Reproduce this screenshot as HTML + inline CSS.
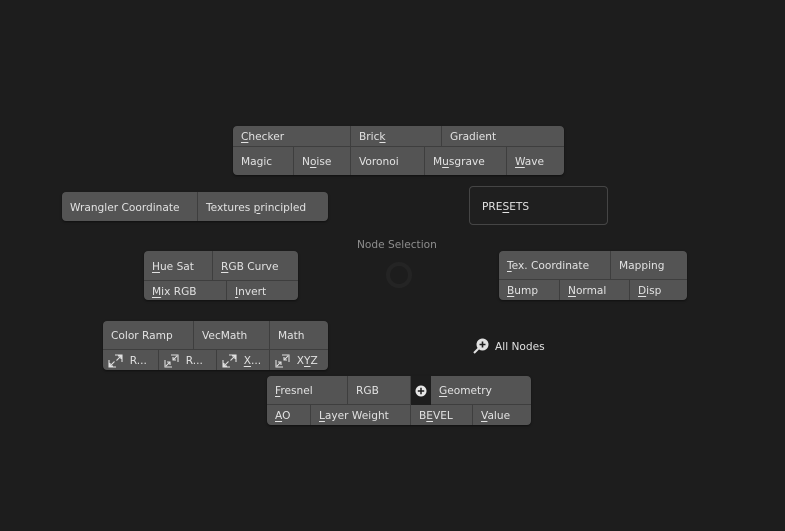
<!DOCTYPE html><html><head><style>
body{margin:0;width:785px;height:531px;background:#1d1d1d;overflow:hidden;font-family:"DejaVu Sans","Liberation Sans",sans-serif;font-size:10.6px;color:#e2e2e2;position:relative}
.b{position:absolute;background:#545454;border-radius:4px;overflow:hidden;box-shadow:0 1px 2px rgba(0,0,0,.5)}
.c{position:absolute;box-sizing:border-box;border-right:1px solid #3e3e3e;border-bottom:1px solid #3e3e3e;padding-left:8px;padding-top:2px;white-space:pre;display:flex;align-items:center}
.n{border-right:none}
u{text-decoration:underline;text-underline-offset:2px}
svg{flex:none}
</style></head><body>

<div class="b" style="left:233px;top:126px;width:331px;height:49px">
<div class="c" style="left:0;top:0;width:118px;height:21px"><span><u>C</u>hecker</span></div>
<div class="c" style="left:118px;top:0;width:91px;height:21px"><span>Bric<u>k</u></span></div>
<div class="c n" style="left:209px;top:0;width:122px;height:21px"><span>Gradient</span></div>
<div class="c" style="left:0;top:21px;width:61px;height:28px;border-bottom:none"><span>Magic</span></div>
<div class="c" style="left:61px;top:21px;width:57px;height:28px;border-bottom:none"><span>N<u>o</u>ise</span></div>
<div class="c" style="left:118px;top:21px;width:74px;height:28px;border-bottom:none"><span>Voronoi</span></div>
<div class="c" style="left:192px;top:21px;width:82px;height:28px;border-bottom:none"><span>M<u>u</u>sgrave</span></div>
<div class="c n" style="left:274px;top:21px;width:57px;height:28px;border-bottom:none"><span><u>W</u>ave</span></div>
</div>

<div class="b" style="left:62px;top:192px;width:266px;height:29px">
<div class="c" style="left:0;top:0;width:136px;height:29px;border-bottom:none"><span>Wrangler Coordinate</span></div>
<div class="c n" style="left:136px;top:0;width:130px;height:29px;border-bottom:none"><span>Textures <u>p</u>rincipled</span></div>
</div>

<div style="position:absolute;left:469px;top:186px;width:139px;height:39px;box-sizing:border-box;border:1px solid #454545;border-radius:4px;background:#1f1f1f;display:flex;align-items:center;padding-left:12px;padding-top:2px"><span>PRE<u>S</u>ETS</span></div>

<div style="position:absolute;left:357px;top:239px;color:#8e8e8e">Node Selection</div>
<div style="position:absolute;left:386px;top:262px;width:26px;height:26px;box-sizing:border-box;border:4px solid #242424;border-radius:50%"></div>

<div class="b" style="left:144px;top:251px;width:154px;height:49px">
<div class="c" style="left:0;top:0;width:69px;height:30px"><span><u>H</u>ue Sat</span></div>
<div class="c n" style="left:69px;top:0;width:85px;height:30px"><span><u>R</u>GB Curve</span></div>
<div class="c" style="left:0;top:30px;width:83px;height:19px;border-bottom:none"><span><u>M</u>ix RGB</span></div>
<div class="c n" style="left:83px;top:30px;width:71px;height:19px;border-bottom:none"><span><u>I</u>nvert</span></div>
</div>

<div class="b" style="left:499px;top:251px;width:188px;height:49px">
<div class="c" style="left:0;top:0;width:112px;height:29px"><span><u>T</u>ex. Coordinate</span></div>
<div class="c n" style="left:112px;top:0;width:76px;height:29px"><span>Mapping</span></div>
<div class="c" style="left:0;top:29px;width:61px;height:20px;border-bottom:none"><span><u>B</u>ump</span></div>
<div class="c" style="left:61px;top:29px;width:70px;height:20px;border-bottom:none"><span><u>N</u>ormal</span></div>
<div class="c n" style="left:131px;top:29px;width:57px;height:20px;border-bottom:none"><span><u>D</u>isp</span></div>
</div>

<div class="b" style="left:103px;top:321px;width:225px;height:49px">
<div class="c" style="left:0;top:0;width:91px;height:29px"><span>Color Ramp</span></div>
<div class="c" style="left:91px;top:0;width:76px;height:29px"><span>VecMath</span></div>
<div class="c n" style="left:167px;top:0;width:58px;height:29px"><span>Math</span></div>
<div class="c" style="left:0;top:29px;width:56px;height:20px;border-bottom:none;padding-left:5px"><svg width="15" height="14" viewBox="0 0 15 14" fill="none" stroke="#e0e0e0" stroke-width="1.1"><path d="M1 6V13H8M7 1H14V8M2 12L6.5 7.5M13 2L8.5 6.5M10 2H13V5M2 9V12H5"/></svg><span>  R...</span></div>
<div class="c" style="left:56px;top:29px;width:58px;height:20px;border-bottom:none;padding-left:5px"><svg width="15" height="14" viewBox="0 0 15 14" fill="none" stroke="#e0e0e0" stroke-width="1.1"><path d="M1 6V13H8M7 1H14V8M2 12L6 8M13 2L9 6M3 8H6V11M9 3V6H12"/></svg><span>  R...</span></div>
<div class="c" style="left:114px;top:29px;width:53px;height:20px;border-bottom:none;padding-left:5px"><svg width="15" height="14" viewBox="0 0 15 14" fill="none" stroke="#e0e0e0" stroke-width="1.1"><path d="M1 6V13H8M7 1H14V8M2 12L6.5 7.5M13 2L8.5 6.5M10 2H13V5M2 9V12H5"/></svg><span>  <u>X</u>...</span></div>
<div class="c n" style="left:167px;top:29px;width:58px;height:20px;border-bottom:none;padding-left:5px"><svg width="15" height="14" viewBox="0 0 15 14" fill="none" stroke="#e0e0e0" stroke-width="1.1"><path d="M1 6V13H8M7 1H14V8M2 12L6 8M13 2L9 6M3 8H6V11M9 3V6H12"/></svg><span>  X<u>Y</u>Z</span></div>
</div>

<div style="position:absolute;left:472px;top:337px;display:flex;align-items:center"><svg width="18" height="18" viewBox="0 0 18 18"><line x1="2" y1="16" x2="7" y2="11" stroke="#e0e0e0" stroke-width="2"/><circle cx="10.5" cy="7.5" r="6" fill="#e0e0e0"/><path d="M10.5 4.5V10.5M7.5 7.5H13.5" stroke="#1d1d1d" stroke-width="1.6"/></svg><span style="margin-left:5px;padding-top:2px">All Nodes</span></div>

<div class="b" style="left:267px;top:376px;width:264px;height:49px">
<div class="c" style="left:0;top:0;width:81px;height:29px"><span><u>F</u>resnel</span></div>
<div class="c" style="left:81px;top:0;width:63px;height:29px"><span>RGB</span></div>
<div style="position:absolute;left:144px;top:0;width:20px;height:29px;background:#1d1d1d;display:flex;align-items:center;justify-content:center"><svg width="12" height="12" viewBox="0 0 12 12"><circle cx="6" cy="6" r="5.5" fill="#e6e6e6"/><path d="M6 2.8V9.2M2.8 6H9.2" stroke="#1d1d1d" stroke-width="1.5"/></svg></div>
<div class="c n" style="left:164px;top:0;width:100px;height:29px"><span><u>G</u>eometry</span></div>
<div class="c" style="left:0;top:29px;width:44px;height:20px;border-bottom:none"><span><u>A</u>O</span></div>
<div class="c" style="left:44px;top:29px;width:100px;height:20px;border-bottom:none"><span><u>L</u>ayer Weight</span></div>
<div class="c" style="left:144px;top:29px;width:62px;height:20px;border-bottom:none"><span>B<u>E</u>VEL</span></div>
<div class="c n" style="left:206px;top:29px;width:58px;height:20px;border-bottom:none"><span><u>V</u>alue</span></div>
</div>
</body></html>
